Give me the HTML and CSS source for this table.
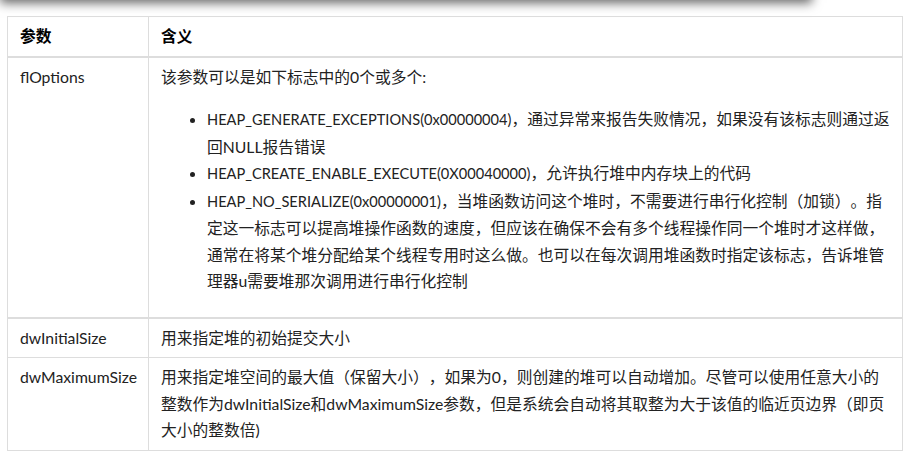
FILE: index.html
```html
<!DOCTYPE html>
<html lang="zh-CN">
<head>
<meta charset="UTF-8">
<meta name="viewport" content="width=device-width, initial-scale=1">
<title>HeapCreate 参数</title>
<link rel="stylesheet" href="styles.css">
</head>
<body>

<div class="shot-above"></div>

<table class="param-table">
  <colgroup>
    <col class="col-name">
    <col>
  </colgroup>
  <thead>
    <tr>
      <th>参数</th>
      <th>含义</th>
    </tr>
  </thead>
  <tbody>
    <tr class="row-big">
      <td>flOptions</td>
      <td>
        <p>该参数可以是如下标志中的0个或多个:</p>
        <ul>
          <li><span class="flag">HEAP_GENERATE_EXCEPTIONS(0x00000004)</span>，通过异常来报告失败情况，如果没有该标志则通过返回NULL报告错误</li>
          <li><span class="flag">HEAP_CREATE_ENABLE_EXECUTE(0X00040000)</span>，允许执行堆中内存块上的代码</li>
          <li><span class="flag">HEAP_NO_SERIALIZE(0x00000001)</span>，当堆函数访问这个堆时，不需要进行串行化控制（加锁）。指定这一标志可以提高堆操作函数的速度，但应该在确保不会有多个线程操作同一个堆时才这样做，通常在将某个堆分配给某个线程专用时这么做。也可以在每次调用堆函数时指定该标志，告诉堆管理器u需要堆那次调用进行串行化控制</li>
        </ul>
      </td>
    </tr>
    <tr>
      <td>dwInitialSize</td>
      <td>用来指定堆的初始提交大小</td>
    </tr>
    <tr>
      <td>dwMaximumSize</td>
      <td>用来指定堆空间的最大值（保留大小），如果为0，则创建的堆可以自动增加。尽管可以使用任意大小的整数作为dwInitialSize和dwMaximumSize参数，但是系统会自动将其取整为大于该值的临近页边界（即页大小的整数倍)</td>
    </tr>
  </tbody>
</table>

</body>
</html>
```

FILE: styles.css
```css
body {
  margin: 0;
  padding: 0 11px 0 7px;
  background: white;
  font-family: Lato, 'Noto Sans CJK SC', sans-serif;
  font-size: 15.75px;
  color: #222;
  text-spacing-trim: space-all;
  overflow: hidden;
}
.shot-above {
  width: 812px;
  height: 40px;
  margin: -40px 0 16px -7px;
  background: white;
  box-shadow: 0 3px 10px rgba(0,0,0,0.6);
}
.param-table {
  width: 100%;
  table-layout: fixed;
  border-collapse: collapse;
  border: 1px solid #ddd;
}
.col-name {
  width: 141px;
}
.param-table th, .param-table td {
  border: 1px solid #ddd;
  padding: 6px 12px 6px 12px;
  line-height: 26.5px;
  text-align: left;
  vertical-align: top;
}
.param-table th {
  font-weight: bold;
  color: #000;
  border-bottom: 2px solid #ddd;
}
.row-big td {
  border-bottom: 2px solid #ddd;
}
.param-table p {
  margin: 0 0 16px 0;
}
.param-table ul {
  margin: 0 0 16px 0;
  padding-left: 46px;
}
.flag {
  font-size: 14.6px;
}
```
